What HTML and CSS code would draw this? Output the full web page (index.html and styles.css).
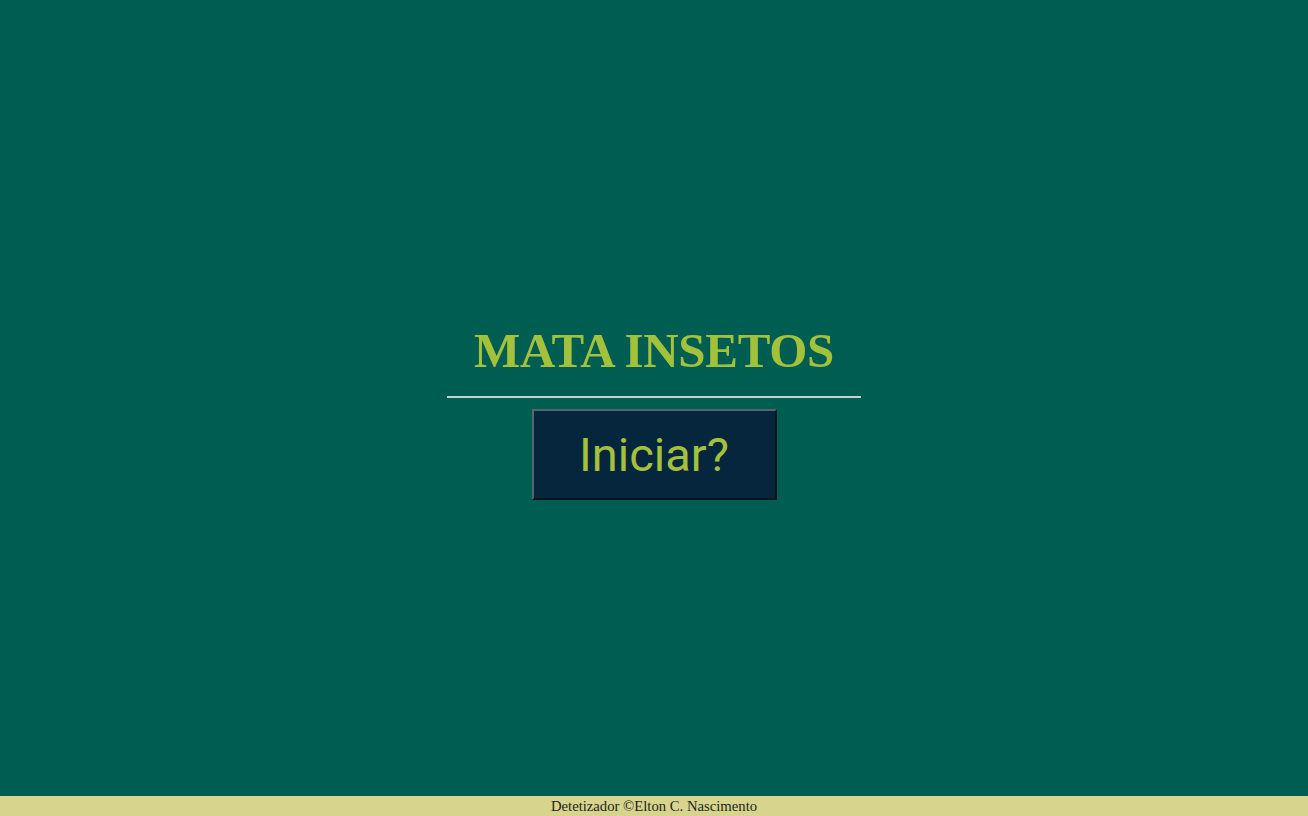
FILE: index.html
```html
<!DOCTYPE html>
<html lang="pt">
<head>
<meta charset="utf-8">
<title>Mata Insetos</title>
<link rel="stylesheet" href="styles.css">
</head>
<body>
<main class="stage">
  <div class="intro">
    <h1 class="title">MATA INSETOS</h1>
    <hr class="rule">
    <button class="start" type="button">Iniciar?</button>
  </div>
</main>
<footer class="footer">Detetizador ©Elton C. Nascimento</footer>
</body>
</html>
```

FILE: styles.css
```css
html, body {
  margin: 0;
  padding: 0;
  height: 100%;
}
body {
  display: flex;
  flex-direction: column;
  background: #005d51;
  font-family: "Liberation Serif", "Times New Roman", serif;
}
.stage {
  flex: 1;
  display: flex;
  align-items: center;
  justify-content: center;
}
.intro {
  display: flex;
  flex-direction: column;
  align-items: center;
  width: 414px;
  margin-top: 28px;
}
.title {
  margin: 0;
  font-size: 49px;
  font-weight: bold;
  line-height: 54px;
  letter-spacing: -0.3px;
  color: #a3c13b;
}
.rule {
  width: 100%;
  height: 2px;
  margin: 18px 0 11px;
  border: 0;
  background: #c7d1cd;
}
.start {
  width: 245px;
  height: 91px;
  background: #06263e;
  border: 2px solid;
  border-color: #56666a #0b1418 #0b1418 #56666a;
  color: #a3c13b;
  font-family: Roboto, "Liberation Sans", sans-serif;
  font-size: 47px;
  padding: 0;
}
.footer {
  height: 20px;
  background: #d7d48e;
  color: #1e1e1a;
  font-size: 14.7px;
  line-height: 20px;
  text-align: center;
}
```
